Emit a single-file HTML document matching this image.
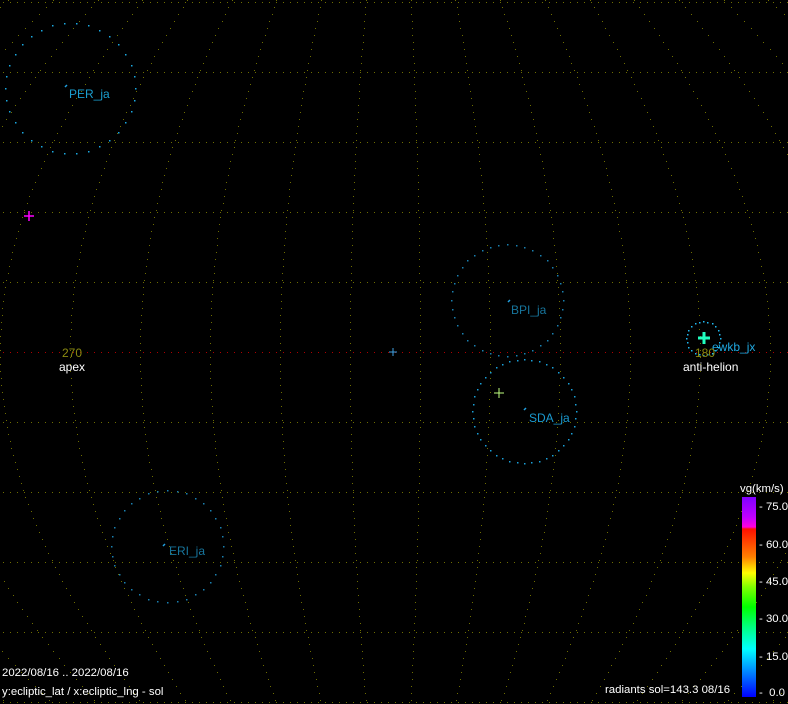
<!DOCTYPE html>
<html><head><meta charset="utf-8"><style>
html,body{margin:0;padding:0;background:#000;}
#w{position:relative;width:788px;height:704px;overflow:hidden;background:#000;font-family:"Liberation Sans",sans-serif;font-size:12px;}
.t{position:absolute;white-space:nowrap;line-height:14px;}
.s{font-size:11.4px;}
svg{position:absolute;left:0;top:0;}
</style></head><body><div id="w">
<svg id="g" width="788" height="704" viewBox="0 0 788 704"></svg>
<div class="t" style="left:69px;top:87px;color:#1a9fd0">PER_ja</div>
<div class="t" style="left:511px;top:303px;color:#17759c">BPI_ja</div>
<div class="t" style="left:529px;top:411px;color:#1a9ad0">SDA_ja</div>
<div class="t" style="left:169px;top:544px;color:#17759c">ERI_ja</div>
<div class="t" style="left:712px;top:340px;color:#20a8e0">ewkb_jx</div>
<div class="t" style="left:62px;top:346px;color:#8a8a10">270</div>
<div class="t" style="left:59px;top:360px;color:#fff">apex</div>
<div class="t" style="left:695px;top:346px;color:#8a8a10">180</div>
<div class="t" style="left:683px;top:360px;color:#fff">anti-helion</div>
<div class="t s" style="left:740px;top:482px;color:#fff">vg(km/s)</div>
<div style="position:absolute;left:742px;top:497px;width:14px;height:200px;background:linear-gradient(to bottom,#8000ff 0%,#c000ff 10%,#ff00e0 15%,#ff1000 16%,#ff8000 30%,#ffff00 38%,#80ff00 45%,#00ff00 55%,#00ff80 65%,#00ffff 76%,#0080ff 88%,#0000ff 100%);"></div>
<div class="t s" style="left:759px;top:500px;color:#fff">- 75.0</div>
<div class="t s" style="left:759px;top:538px;color:#fff">- 60.0</div>
<div class="t s" style="left:759px;top:575px;color:#fff">- 45.0</div>
<div class="t s" style="left:759px;top:612px;color:#fff">- 30.0</div>
<div class="t s" style="left:759px;top:650px;color:#fff">- 15.0</div>
<div class="t s" style="left:759px;top:686px;color:#fff">-&nbsp; 0.0</div>
<div class="t s" style="left:2px;top:666px;color:#fff">2022/08/16 .. 2022/08/16</div>
<div class="t s" style="left:2px;top:685px;color:#fff">y:ecliptic_lat / x:ecliptic_lng - sol</div>
<div class="t s" style="left:605px;top:683px;color:#fff">radiants sol=143.3 08/16</div>
</div>
<script>
var s='',xc=394,yc=352;
function dot(x,y,c){s+='<rect x="'+Math.round(x)+'" y="'+Math.round(y)+'" width="1" height="1" fill="'+c+'"/>';}
function dot2(x,y,c){s+='<rect x="'+Math.round(x)+'" y="'+Math.round(y)+'" width="1.5" height="1.5" fill="'+c+'"/>';}
var olive='#6e6e00';
for(var j=-5;j<=5;j++){var y=yc-70*j;if(y<0)y=1;if(y>703)y=702;for(var x=3;x<788;x+=7)dot(x,y,j==0?'#b00000':olive);}
for(var k=-20;k<=20;k++){var D=306+70*k;for(var y=0;y<704;y+=7){var lat=(yc-y)/7*Math.PI/180;var x=xc+D*Math.cos(lat);if(x>=0&&x<788)dot(x,y,olive);}}
function circ(cx,cy,r,n,c){for(var i=0;i<n;i++){var a=i/n*2*Math.PI;dot2(cx+r*Math.cos(a),cy+r*Math.sin(a),c);}}
circ(70,88,65,34,'#1aa8e0');
circ(507,300,56,40,'#1a80b0');
circ(524,411,52,44,'#1aa0d8');
circ(167,546,56,36,'#1a80b0');
circ(703,338,17,24,'#20b8f0');
s+='<path d="M24 216h10M29 211v10" stroke="#ff00ff" stroke-width="1.5"/>';
s+='<path d="M494 393h10M499 388v10" stroke="#c0ff80" stroke-width="1"/>';
s+='<path d="M389 352h8M393 348v8" stroke="#40a0e0" stroke-width="1"/>';
s+='<path d="M698 338h12M704 332v12" stroke="#20ffc0" stroke-width="3"/>';
s+='<path d="M65 87l2-2M508 302l2-2M524 410l2-2M163 546l2-2" stroke="#20a0e0" stroke-width="1.5"/>';
document.getElementById('g').innerHTML=s;
</script>
</body></html>
